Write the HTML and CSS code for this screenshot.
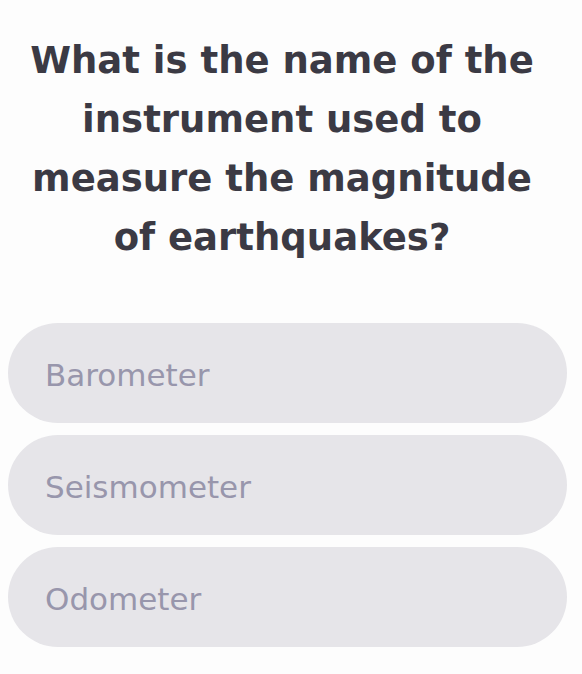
FILE: index.html
```html
<!DOCTYPE html>
<html>
<head>
<meta charset="utf-8">
<link rel="stylesheet" href="styles.css">
</head>
<body>
<main class="quiz">
  <h1 class="question">What is the name of the<br>instrument used to<br>measure the magnitude<br>of earthquakes?</h1>
  <div class="options">
    <div class="option">Barometer</div>
    <div class="option">Seismometer</div>
    <div class="option">Odometer</div>
  </div>
</main>
</body>
</html>
```
FILE: styles.css
```css
html, body {
  margin: 0;
  padding: 0;
  background: #fdfdfd;
}
.quiz {
  width: 582px;
  height: 674px;
  box-sizing: border-box;
  padding: 31px 15px 0 8px;
  display: flex;
  flex-direction: column;
}
.question {
  margin: 0;
  width: 548px;
  text-align: center;
  font-family: "DejaVu Sans", sans-serif;
  font-weight: 700;
  font-size: 37px;
  line-height: 59px;
  color: #3b3a44;
}
.options {
  margin-top: 56px;
  display: flex;
  flex-direction: column;
  gap: 12px;
}
.option {
  height: 100px;
  border-radius: 50px;
  background: #e6e5e9;
  display: flex;
  align-items: center;
  padding-left: 37px;
  padding-top: 4px;
  box-sizing: border-box;
  font-family: "DejaVu Sans", sans-serif;
  font-size: 31px;
  color: #9896ac;
}
```
